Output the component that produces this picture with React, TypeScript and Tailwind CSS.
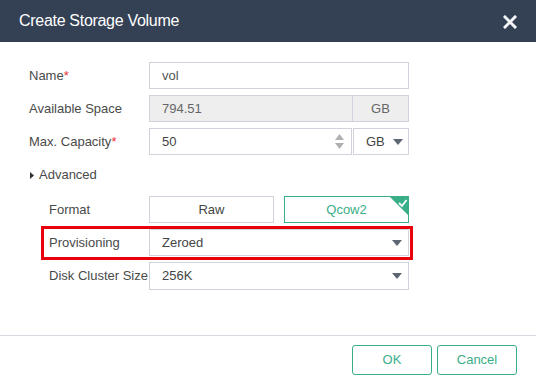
import React, { useState } from 'react';

const font = { fontFamily: '"Liberation Sans", Arial, sans-serif' };

function Caret() {
  return (
    <svg width="10" height="6" viewBox="0 0 10 6" className="shrink-0">
      <path d="M0 0 L10 0 L5 6 Z" fill="#5f6673" />
    </svg>
  );
}

function Label({ text, required, indent }: { text: string; required?: boolean; indent?: boolean }) {
  return (
    <div className={`w-[120px] ${indent ? 'pl-[20px]' : ''} shrink-0 text-[13px] text-[#4a4a4a] whitespace-nowrap`}>
      {text}
      {required && <span className="text-[#e33]">*</span>}
    </div>
  );
}

function SelectBox({ value }: { value: string }) {
  return (
    <div className="flex-1 h-full border border-[#d2d2dd] flex items-center justify-between pl-[12px] pr-[6px] text-[13px] text-[#444] bg-white">
      <span>{value}</span>
      <Caret />
    </div>
  );
}

export default function App() {
  const [name, setName] = useState('vol');
  const [format, setFormat] = useState('Qcow2');

  return (
    <div className="w-[536px] h-[383px] bg-white flex flex-col" style={font}>
      {/* Header */}
      <div className="h-[42px] bg-[#344054] flex items-center justify-between pl-[19px] pr-[19px] shrink-0">
        <h1 className="text-[16px] tracking-[-0.3px] text-white">Create Storage Volume</h1>
        <svg width="14" height="14" viewBox="0 0 14 14" className="mt-[1px]">
          <path d="M2 2 L12 12 M12 2 L2 12" stroke="#f4f5f7" strokeWidth="3" strokeLinecap="square" />
        </svg>
      </div>

      {/* Body */}
      <div className="flex-1 pt-[20px] pl-[29px] pr-[127px]">
        <div className="flex flex-col gap-[6px]">
          <div className="flex items-center h-[27px]">
            <Label text="Name" required />
            <input
              value={name}
              onChange={(e) => setName(e.target.value)}
              className="flex-1 h-full border border-[#d2d2dd] px-[12px] text-[13px] text-[#555] outline-none"
            />
          </div>
          <div className="flex items-center h-[27px]">
            <Label text="Available Space" />
            <div className="flex-1 h-full flex border border-[#d2d2dd] bg-[#eeeeee] text-[13px] text-[#666]">
              <div className="flex-1 flex items-center px-[12px]">794.51</div>
              <div className="w-[56px] border-l border-[#d2d2dd] flex items-center justify-center">GB</div>
            </div>
          </div>
          <div className="flex items-center h-[27px]">
            <Label text="Max. Capacity" required />
            <div className="flex-1 h-full flex gap-[1px]">
              <div className="flex-1 border border-[#d2d2dd] flex items-center justify-between pl-[12px] pr-[7px] text-[13px] text-[#444]">
                <span>50</span>
                <div className="flex flex-col gap-[3px]">
                  <svg width="9" height="6" viewBox="0 0 9 6"><path d="M0 6 L9 6 L4.5 0 Z" fill="#b0b0b0" /></svg>
                  <svg width="9" height="6" viewBox="0 0 9 6"><path d="M0 0 L9 0 L4.5 6 Z" fill="#b0b0b0" /></svg>
                </div>
              </div>
              <div className="w-[56px] border border-[#d2d2dd] flex items-center justify-between pl-[12px] pr-[5px] text-[13px] text-[#444]">
                <span>GB</span>
                <Caret />
              </div>
            </div>
          </div>
        </div>

        <div className="flex items-center gap-[5px] mt-[13px] h-[14px] text-[13px] text-[#4a4a4a]">
          <svg width="4" height="7" viewBox="0 0 4 7" className="ml-[1px]"><path d="M0 0 L4 3.5 L0 7 Z" fill="#333" /></svg>
          <span>Advanced</span>
        </div>

        <div className="flex flex-col gap-[6px] mt-[14px]">
          <div className="flex items-center h-[27px]">
            <Label text="Format" indent />
            <div className="flex-1 h-full flex gap-[10px]">
              {['Raw', 'Qcow2'].map((f) => (
                <button
                  key={f}
                  onClick={() => setFormat(f)}
                  className={`flex-1 relative overflow-hidden border text-[13px] ${
                    format === f ? 'border-[#3aae88] text-[#3aae88]' : 'border-[#d2d2dd] text-[#444]'
                  }`}
                >
                  {f}
                  {format === f && (
                    <svg width="20" height="20" viewBox="0 0 20 20" className="absolute -top-[1px] -right-[1px]">
                      <path d="M0 0 L20 0 L20 20 Z" fill="#3aae88" />
                      <path d="M10 7 L13 10 L17.5 4" stroke="#fff" strokeWidth="1.8" fill="none" />
                    </svg>
                  )}
                </button>
              ))}
            </div>
          </div>
          <div className="relative flex items-center h-[27px]">
            <div className="absolute left-[12px] -top-[3px] -right-[4px] -bottom-[4px] border-[3px] border-[#e8000b] pointer-events-none" />
            <Label text="Provisioning" indent />
            <SelectBox value="Zeroed" />
          </div>
          <div className="flex items-center h-[28px]">
            <Label text="Disk Cluster Size" indent />
            <SelectBox value="256K" />
          </div>
        </div>
      </div>

      {/* Footer */}
      <div className="border-t border-[#d8d8e0] h-[48px] shrink-0 flex items-start justify-end gap-[5px] pt-[9px] pr-[19px]">
        <button className="w-[80px] h-[30px] border border-[#3aae88] rounded-[3px] text-[13px] text-[#3aae88]">OK</button>
        <button className="w-[80px] h-[30px] border border-[#3aae88] rounded-[3px] text-[13px] text-[#3aae88]">Cancel</button>
      </div>
    </div>
  );
}
